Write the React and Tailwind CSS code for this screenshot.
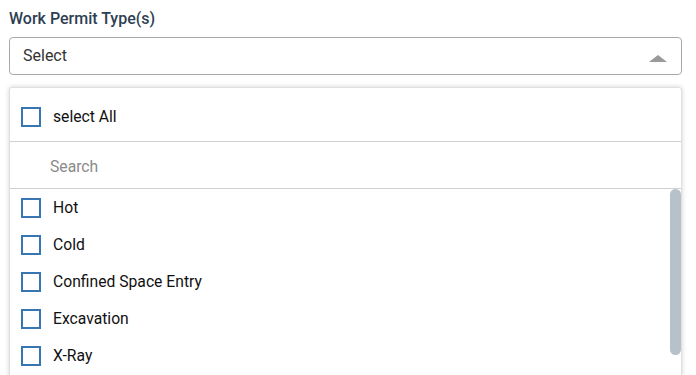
import { useState } from 'react';

const options = ['Hot', 'Cold', 'Confined Space Entry', 'Excavation', 'X-Ray'];

function Box({ checked, onClick }) {
  return (
    <span
      onClick={onClick}
      className={`w-5 h-5 shrink-0 border-2 border-[#3775b3] ${checked ? 'bg-[#3775b3]' : 'bg-white'}`}
    />
  );
}

export default function App() {
  const [picked, setPicked] = useState([]);
  const toggle = (o) =>
    setPicked(picked.includes(o) ? picked.filter((p) => p !== o) : [...picked, o]);

  return (
    <div className="w-[696px] h-[375px] bg-white overflow-hidden pl-[9px] pt-[9px] font-['Roboto',sans-serif]">
      <div className="w-[673px]">
        <label className="block text-[16px] leading-[20px] font-medium text-[#2e4052]">Work Permit Type(s)</label>

        {/* select trigger */}
        <div className="mt-[8px] h-[38px] border border-[#a8a8a8] rounded-[4px] flex items-center justify-between pl-[13px] pr-[14px]">
          <span className="text-[16px] text-[#333]">Select</span>
          <svg width="18" height="7" viewBox="0 0 18 7" className="mt-[5px]">
            <polygon points="0,7 9,0 18,7" fill="#9a9a9a" />
          </svg>
        </div>

        {/* dropdown */}
        <div className="mt-[12px] h-[300px] border border-[#e0e0e0] rounded-t-[3px] shadow-[0_0_5px_rgba(0,0,0,0.18)] bg-white">
          <div className="h-[54px] flex items-start gap-3 pl-[11px] pt-[19px] border-b border-[#d0d0d0]">
            <Box checked={picked.length === options.length} onClick={() => setPicked(picked.length === options.length ? [] : options)} />
            <span className="text-[15.7px] leading-[20px] text-[#111]">select All</span>
          </div>
          <div className="h-[47px] flex items-center pl-[40px] pt-[3px] border-b border-[#d0d0d0]">
            <input placeholder="Search" className="outline-none text-[15.7px] text-[#333] placeholder:text-[#8a8a8a] w-[400px]" />
          </div>
          <div className="relative">
            {options.map((o) => (
              <div key={o} className="h-[37px] flex items-center gap-3 pl-[11px]">
                <Box checked={picked.includes(o)} onClick={() => toggle(o)} />
                <span className="text-[15.7px] text-[#111]">{o}</span>
              </div>
            ))}
            <div className="absolute right-0 top-0 w-[11px] h-[166px] rounded-full bg-[#b7c1ca]" />
          </div>
        </div>
      </div>
    </div>
  );
}
